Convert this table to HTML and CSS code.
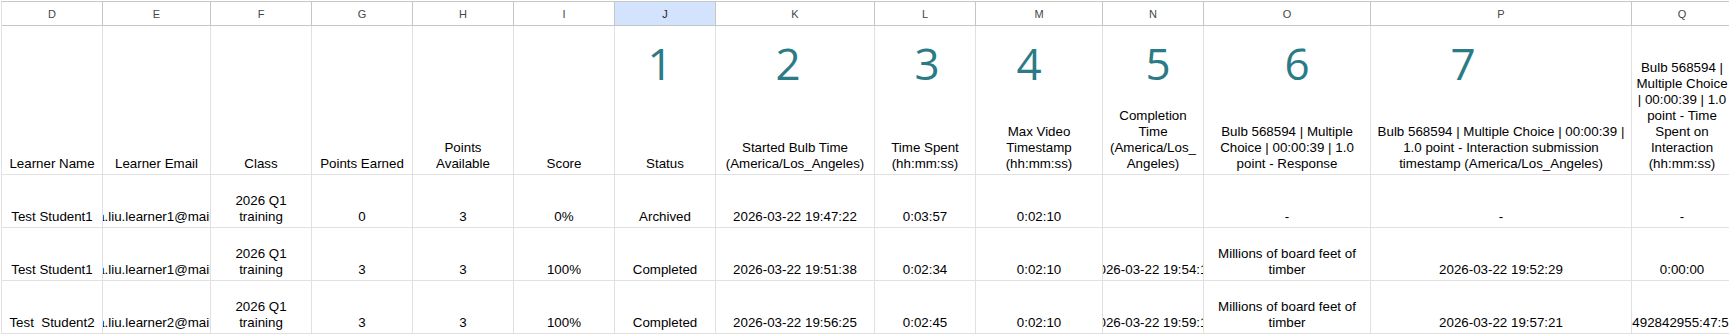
FILE: index.html
```html
<!DOCTYPE html>
<html lang="en">
<head>
<meta charset="utf-8">
<title>Sheet export</title>
<link rel="stylesheet" href="styles.css">
</head>
<body>
<div class="sheet">
  <div class="grid">
    <div class="col-head">D</div>
    <div class="col-head">E</div>
    <div class="col-head">F</div>
    <div class="col-head">G</div>
    <div class="col-head">H</div>
    <div class="col-head">I</div>
    <div class="col-head selected">J</div>
    <div class="col-head">K</div>
    <div class="col-head">L</div>
    <div class="col-head">M</div>
    <div class="col-head">N</div>
    <div class="col-head">O</div>
    <div class="col-head">P</div>
    <div class="col-head">Q</div>

    <div class="cell"><span>Learner Name</span></div>
    <div class="cell"><span>Learner Email</span></div>
    <div class="cell"><span>Class</span></div>
    <div class="cell"><span>Points Earned</span></div>
    <div class="cell"><span>Points<br>Available</span></div>
    <div class="cell"><span>Score</span></div>
    <div class="cell"><span>Status</span></div>
    <div class="cell"><span>Started Bulb Time<br>(America/Los_Angeles)</span></div>
    <div class="cell"><span>Time Spent<br>(hh:mm:ss)</span></div>
    <div class="cell"><span>Max Video<br>Timestamp<br>(hh:mm:ss)</span></div>
    <div class="cell"><span>Completion<br>Time<br>(America/Los_<br>Angeles)</span></div>
    <div class="cell"><span>Bulb 568594 | Multiple<br>Choice | 00:00:39 | 1.0<br>point - Response</span></div>
    <div class="cell"><span>Bulb 568594 | Multiple Choice | 00:00:39 |<br>1.0 point - Interaction submission<br>timestamp (America/Los_Angeles)</span></div>
    <div class="cell"><span>Bulb 568594 |<br>Multiple Choice<br>| 00:00:39 | 1.0<br>point - Time<br>Spent on<br>Interaction<br>(hh:mm:ss)</span></div>

    <div class="cell"><span>Test Student1</span></div>
    <div class="cell"><span>jenna.liu.learner1@mail.com</span></div>
    <div class="cell"><span>2026 Q1<br>training</span></div>
    <div class="cell"><span>0</span></div>
    <div class="cell"><span>3</span></div>
    <div class="cell"><span>0%</span></div>
    <div class="cell"><span>Archived</span></div>
    <div class="cell"><span>2026-03-22 19:47:22</span></div>
    <div class="cell"><span>0:03:57</span></div>
    <div class="cell"><span>0:02:10</span></div>
    <div class="cell"><span></span></div>
    <div class="cell"><span>-</span></div>
    <div class="cell"><span>-</span></div>
    <div class="cell"><span>-</span></div>

    <div class="cell"><span>Test Student1</span></div>
    <div class="cell"><span>jenna.liu.learner1@mail.com</span></div>
    <div class="cell"><span>2026 Q1<br>training</span></div>
    <div class="cell"><span>3</span></div>
    <div class="cell"><span>3</span></div>
    <div class="cell"><span>100%</span></div>
    <div class="cell"><span>Completed</span></div>
    <div class="cell"><span>2026-03-22 19:51:38</span></div>
    <div class="cell"><span>0:02:34</span></div>
    <div class="cell"><span>0:02:10</span></div>
    <div class="cell"><span>2026-03-22 19:54:15</span></div>
    <div class="cell"><span>Millions of board feet of<br>timber</span></div>
    <div class="cell"><span>2026-03-22 19:52:29</span></div>
    <div class="cell"><span>0:00:00</span></div>

    <div class="cell"><span>Test&nbsp; Student2</span></div>
    <div class="cell"><span>jenna.liu.learner2@mail.com</span></div>
    <div class="cell"><span>2026 Q1<br>training</span></div>
    <div class="cell"><span>3</span></div>
    <div class="cell"><span>3</span></div>
    <div class="cell"><span>100%</span></div>
    <div class="cell"><span>Completed</span></div>
    <div class="cell"><span>2026-03-22 19:56:25</span></div>
    <div class="cell"><span>0:02:45</span></div>
    <div class="cell"><span>0:02:10</span></div>
    <div class="cell"><span>2026-03-22 19:59:13</span></div>
    <div class="cell"><span>Millions of board feet of<br>timber</span></div>
    <div class="cell"><span>2026-03-22 19:57:21</span></div>
    <div class="cell"><span>-492842955:47:56</span></div>
  </div>

  <span class="marker m1">1</span>
  <span class="marker m2">2</span>
  <span class="marker m3">3</span>
  <span class="marker m4">4</span>
  <span class="marker m5">5</span>
  <span class="marker m6">6</span>
  <span class="marker m7">7</span>
</div>
</body>
</html>
```

FILE: styles.css
```css
html, body {
  margin: 0;
  padding: 0;
  overflow: hidden;
  background: #ffffff;
}

body {
  font-family: "Liberation Sans", Arial, sans-serif;
  font-size: 13.33px;
  color: #000000;
}

.sheet {
  position: relative;
  width: 1729px;
  height: 334px;
  overflow: hidden;
}

.grid {
  display: grid;
  grid-template-columns: 101px 108px 101px 101px 101px 101px 101px 159px 101px 127px 101px 167px 261px 101px;
  grid-template-rows: 24px 149px 53px 53px 53px;
  width: max-content;
  margin: 1px 0 0 1px;
  border-top: 1px solid #c4c7c5;
  border-left: 1px solid #e1e1e1;
}

.col-head {
  box-sizing: border-box;
  display: flex;
  align-items: center;
  justify-content: center;
  font-size: 11px;
  color: #444746;
  border-right: 1px solid #c4c7c5;
  border-bottom: 1px solid #c4c7c5;
  background: #ffffff;
}

.col-head.selected {
  background: #d3e3fd;
  color: #1f1f1f;
}

.cell {
  box-sizing: border-box;
  display: flex;
  align-items: flex-end;
  justify-content: center;
  padding: 0 3px 2px;
  overflow: hidden;
  text-align: center;
  line-height: 16px;
  white-space: nowrap;
  border-right: 1px solid #e1e1e1;
  border-bottom: 1px solid #e1e1e1;
}

.cell span {
  flex: none;
}

.marker {
  position: absolute;
  top: 41px;
  transform: translateX(-50%);
  font-family: "Open Sans", sans-serif;
  font-size: 44px;
  line-height: 44px;
  color: #2a7b86;
}

.m1 { left: 660px; }
.m2 { left: 788px; }
.m3 { left: 927px; }
.m4 { left: 1029px; }
.m5 { left: 1158px; }
.m6 { left: 1297px; }
.m7 { left: 1463px; }
```
